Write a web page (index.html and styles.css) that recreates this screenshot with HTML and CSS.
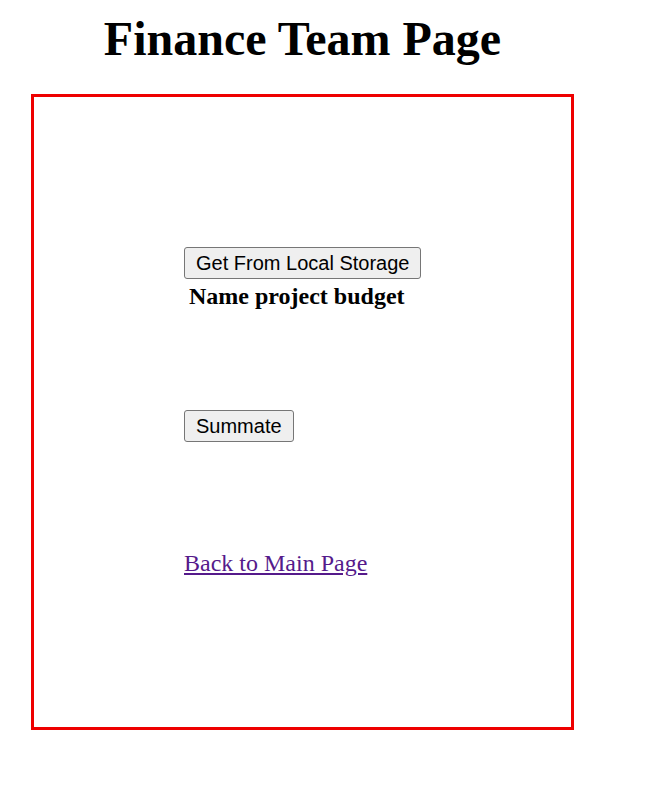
FILE: index.html
```html
<!DOCTYPE html>
<html>
<head>
<meta charset="utf-8">
<title>Finance Team Page</title>
<link rel="stylesheet" href="styles.css">
</head>
<body>
<h1 class="title">Finance Team Page</h1>
<div class="panel">
  <button class="btn" type="button">Get From Local Storage</button>
  <table class="budget">
    <tr><th>Name project budget</th></tr>
  </table>
  <button class="btn btn-sum" type="button">Summate</button>
  <a class="back" href="#">Back to Main Page</a>
</div>
</body>
</html>
```

FILE: styles.css
```css
html, body {
  margin: 0;
  padding: 0;
  background: #fff;
}
body {
  font-family: "Liberation Serif", "Times New Roman", serif;
  color: #000;
}
.title {
  font-family: "Liberation Serif", "Times New Roman", serif;
  font-size: 48px;
  font-weight: bold;
  line-height: 55px;
  margin: 11px 0 28px 31px;
  width: 543px;
  text-align: center;
}
.panel {
  margin-left: 31px;
  width: 237px;
  height: 330px;
  padding: 150px;
  border: 3px solid #ee0000;
  display: flex;
  flex-direction: column;
  align-items: flex-start;
}
.btn {
  font-family: "Liberation Sans", Arial, sans-serif;
  font-size: 20px;
  color: #000;
  background: #efefef;
  border: 1px solid #767676;
  border-radius: 3px;
  height: 32px;
  padding: 0 11px;
  margin: 0;
  line-height: 30px;
  white-space: nowrap;
  flex-shrink: 0;
  width: max-content;
}
.budget {
  border-spacing: 3px;
  margin: 0;
  flex-shrink: 0;
}
.budget th {
  padding: 1px 2px;
  font-size: 24px;
  font-weight: bold;
  line-height: 27px;
  text-align: left;
  white-space: nowrap;
}
.btn-sum {
  margin-top: 96px;
}
.back {
  margin-top: 107px;
  font-size: 24px;
  line-height: 28px;
  color: #551a8b;
  text-decoration: underline;
  white-space: nowrap;
}
```
